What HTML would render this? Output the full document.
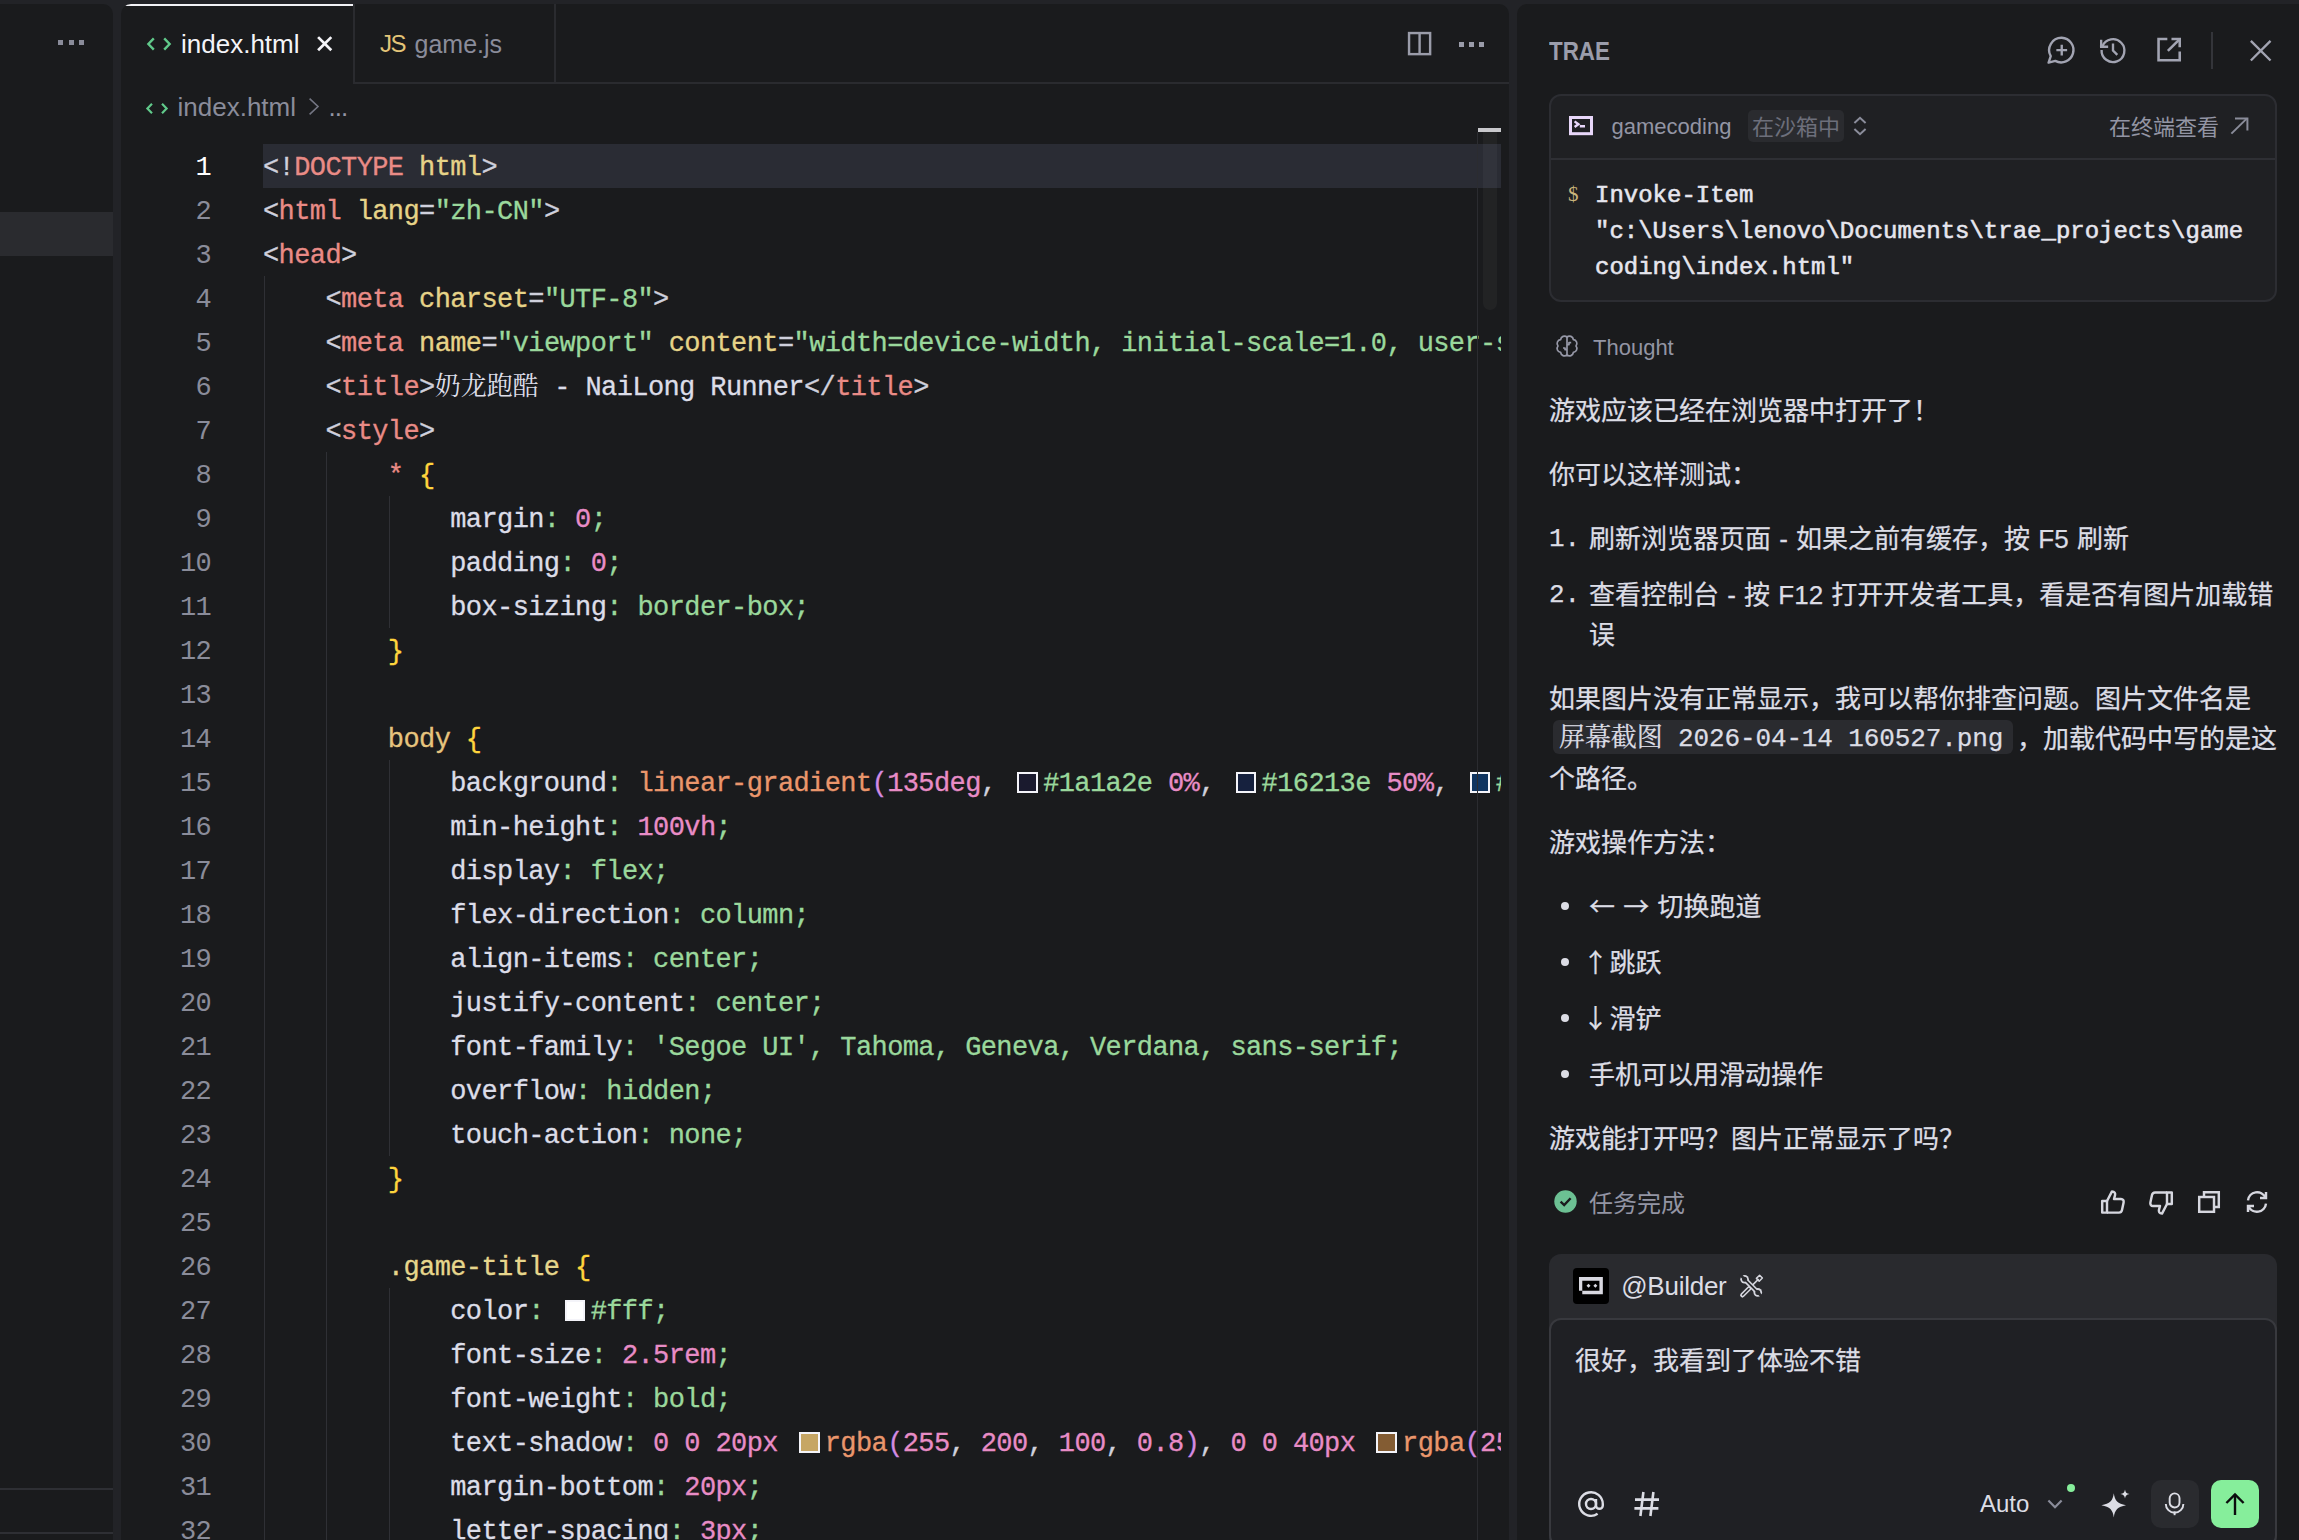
<!DOCTYPE html>
<html lang="zh-CN">
<head>
<meta charset="UTF-8">
<title>TRAE - index.html</title>
<style>
*{margin:0;padding:0;box-sizing:border-box}
html,body{width:2299px;height:1540px;overflow:hidden;background:#222327}
body{position:relative;font-family:"Liberation Sans","Noto Sans CJK SC",sans-serif;color:#dcdde5;-webkit-font-smoothing:antialiased}
.abs{position:absolute}
svg{position:absolute;overflow:visible}
/* panels */
#left{left:0;top:4px;width:113px;height:1540px;background:#1a1b1d;border-radius:0 10px 0 0}
#editor{left:121px;top:4px;width:1388px;height:1540px;background:#1a1b1d;border-radius:10px 10px 0 0;overflow:hidden}
#chat{left:1517px;top:4px;width:790px;height:1540px;background:#1a1b1d;border-radius:10px 0 0 0;overflow:hidden}
.t{position:absolute;white-space:pre;line-height:1}
/* code */
#code{position:absolute;left:0;top:0;width:1380px;height:1540px;overflow:hidden}
.ln{position:absolute;left:0;width:90.2px;text-align:right;font:27px/44px "Liberation Mono",monospace;letter-spacing:-0.6px;color:#8a8c9a;white-space:pre;height:44px;margin-top:2px}
.cl{position:absolute;left:142px;height:44px;font:27px/44px "Liberation Mono","Noto Serif CJK SC",monospace;letter-spacing:-0.6px;white-space:pre;color:#dcdde8;margin-top:2px;-webkit-text-stroke-width:0.3px}
.cj{font-size:26px;letter-spacing:0;-webkit-text-stroke-width:0}
.cl i,.ln i{font-style:normal}
.p{color:#cfd0dc}.n{color:#e98b86}.a{color:#e6d388}.s{color:#9ad89c}.w{color:#dcdde8}
.k{color:#e88cc6}.f{color:#ea966c}.v{color:#d38ae2}.y{color:#ffd53d}.o{color:#e6d68c}.b{color:#e6c47e}
.sw{display:inline-block;width:20.8px;height:20.8px;border:2.3px solid #f4f4f9;margin:0 5.2px 0 5.2px;vertical-align:middle;position:relative;top:-1px}
.gd{position:absolute;width:1px;background:#2f3035}
.m{font-size:26px;color:#dcdde5;word-spacing:1px;-webkit-text-stroke-width:0.25px}
.tm{font:24px/1 "Liberation Mono",monospace;color:#e6e6ee;-webkit-text-stroke:0.55px #e6e6ee}
.ic{font-family:"Liberation Mono","Noto Serif CJK SC",monospace;letter-spacing:-0.12px;word-spacing:0;position:relative;top:-2px}
.ar{font-family:"Noto Sans CJK SC",sans-serif}
.dot{position:absolute;left:44px;width:8px;height:8px;border-radius:50%;background:#dcdde5}
</style>
</head>
<body>

<!-- LEFT STRIP -->
<div id="left" class="abs">
  <div class="abs" style="left:0;top:208px;width:113px;height:44px;background:#2a2b2f"></div>
  <div class="abs" style="left:58px;top:36px;width:5px;height:5px;background:#8a8c9a"></div>
  <div class="abs" style="left:68.5px;top:36px;width:5px;height:5px;background:#8a8c9a"></div>
  <div class="abs" style="left:79px;top:36px;width:5px;height:5px;background:#8a8c9a"></div>
  <div class="abs" style="left:0;top:1484px;width:113px;height:2px;background:#2e2f34"></div>
  <div class="abs" style="left:0;top:1528px;width:113px;height:2px;background:#2e2f34"></div>
</div>

<!-- EDITOR -->
<div id="editor" class="abs">
  <!-- tab bar -->
  <div class="abs" style="left:232px;top:78px;width:1160px;height:2px;background:#2a2b2f"></div>
  <div class="abs" style="left:0;top:0;width:232px;height:2px;background:#f2f2f6"></div>
  <div class="abs" style="left:232px;top:0;width:2px;height:80px;background:#2a2b2f"></div>
  <div class="abs" style="left:433px;top:0;width:2px;height:80px;background:#2a2b2f"></div>
  <svg style="left:25px;top:33px" width="26" height="14" viewBox="0 0 26 14" fill="none" stroke="#60c98a" stroke-width="2.4"><path d="M7.8 1.4 L2.4 7 L7.8 12.6"/><path d="M18.2 1.4 L23.6 7 L18.2 12.6"/></svg>
  <div class="t" style="left:60px;top:27px;font-size:26px;color:#f4f4f8">index.html</div>
  <svg style="left:196.2px;top:32.4px" width="15.4" height="15.4" viewBox="0 0 14 14" fill="none" stroke="#f4f4f8" stroke-width="2.5"><path d="M1 1 L13 13 M13 1 L1 13"/></svg>
  <div class="t" style="left:259px;top:28px;font-size:24px;color:#e3c478;letter-spacing:-1.4px">JS</div>
  <div class="t" style="left:293.5px;top:28px;font-size:25px;color:#8a8c9a">game.js</div>
  <!-- top-right actions -->
  <svg style="left:1286.6px;top:27.8px" width="23.2" height="23.2" viewBox="0 0 22 22" fill="none" stroke="#9a9ca9" stroke-width="2.3"><rect x="1" y="1" width="20" height="20"/><path d="M11 1 V21"/></svg>
  <div class="abs" style="left:1338px;top:38px;width:5px;height:5px;background:#9a9ca9"></div>
  <div class="abs" style="left:1348px;top:38px;width:5px;height:5px;background:#9a9ca9"></div>
  <div class="abs" style="left:1358px;top:38px;width:5px;height:5px;background:#9a9ca9"></div>
  <!-- breadcrumb -->
  <svg style="left:25px;top:99px" width="22" height="11" viewBox="0 0 22 11" fill="none" stroke="#60c98a" stroke-width="2.2"><path d="M6 0.8 L1.4 5.5 L6 10.2"/><path d="M16 0.8 L20.6 5.5 L16 10.2"/></svg>
  <div class="t" style="left:56.5px;top:89.5px;font-size:26px;color:#8a8c9a">index.html</div>
  <svg style="left:188px;top:94px" width="10" height="17" viewBox="0 0 10 17" fill="none" stroke="#737582" stroke-width="1.6"><path d="M0.6 0.7 L9 8.5 L0.6 16.3"/></svg>
  <div class="t" style="left:207.4px;top:89.5px;font-size:26px;color:#9395a4;letter-spacing:-0.87px">...</div>
  <!-- current line highlight -->
  <div class="abs" style="left:142px;top:140px;width:1238px;height:44px;background:#2a2c34"></div>
  <!-- indent guides -->
  <div class="gd" style="left:143px;top:272px;height:1300px"></div>
  <div class="gd" style="left:205px;top:448px;height:1100px"></div>
  <div class="gd" style="left:267.5px;top:492px;height:132px"></div>
  <div class="gd" style="left:267.5px;top:756px;height:396px"></div>
  <div class="gd" style="left:267.5px;top:1284px;height:300px"></div>
  <!-- code -->
  <div id="code">
<div class=ln style="top:140px;color:#fff">1</div><div class=cl style="top:140px"><i class=p>&lt;!</i><i class=n>DOCTYPE</i><i class=a> html</i><i class=p>&gt;</i></div>
<div class=ln style="top:184px">2</div><div class=cl style="top:184px"><i class=p>&lt;</i><i class=n>html</i><i class=a> lang</i><i class=p>=</i><i class=s>"zh-CN"</i><i class=p>&gt;</i></div>
<div class=ln style="top:228px">3</div><div class=cl style="top:228px"><i class=p>&lt;</i><i class=n>head</i><i class=p>&gt;</i></div>
<div class=ln style="top:272px">4</div><div class=cl style="top:272px">    <i class=p>&lt;</i><i class=n>meta</i><i class=a> charset</i><i class=p>=</i><i class=s>"UTF-8"</i><i class=p>&gt;</i></div>
<div class=ln style="top:316px">5</div><div class=cl style="top:316px">    <i class=p>&lt;</i><i class=n>meta</i><i class=a> name</i><i class=p>=</i><i class=s>"viewport"</i><i class=a> content</i><i class=p>=</i><i class=s>"width=device-width, initial-scale=1.0, user-scalable=no"</i><i class=p>&gt;</i></div>
<div class=ln style="top:360px">6</div><div class=cl style="top:360px">    <i class=p>&lt;</i><i class=n>title</i><i class=p>&gt;</i><i class=cj>奶龙跑酷</i> - NaiLong Runner<i class=p>&lt;/</i><i class=n>title</i><i class=p>&gt;</i></div>
<div class=ln style="top:404px">7</div><div class=cl style="top:404px">    <i class=p>&lt;</i><i class=n>style</i><i class=p>&gt;</i></div>
<div class=ln style="top:448px">8</div><div class=cl style="top:448px">        <i class=n>*</i> <i class=y>{</i></div>
<div class=ln style="top:492px">9</div><div class=cl style="top:492px">            margin<i class=s>:</i> <i class=k>0</i><i class=s>;</i></div>
<div class=ln style="top:536px">10</div><div class=cl style="top:536px">            padding<i class=s>:</i> <i class=k>0</i><i class=s>;</i></div>
<div class=ln style="top:580px">11</div><div class=cl style="top:580px">            box-sizing<i class=s>:</i> <i class=s>border-box;</i></div>
<div class=ln style="top:624px">12</div><div class=cl style="top:624px">        <i class=y>}</i></div>
<div class=ln style="top:668px">13</div><div class=cl style="top:668px"></div>
<div class=ln style="top:712px">14</div><div class=cl style="top:712px">        <i class=b>body</i> <i class=y>{</i></div>
<div class=ln style="top:756px">15</div><div class=cl style="top:756px">            background<i class=s>:</i> <i class=f>linear-gradient</i><i class=v>(</i><i class=k>135deg</i><i class=p>,</i> <i class=sw style="background:#1a1a2e"></i><i class=s>#1a1a2e</i> <i class=k>0%</i><i class=p>,</i> <i class=sw style="background:#16213e"></i><i class=s>#16213e</i> <i class=k>50%</i><i class=p>,</i> <i class=sw style="background:#0f3460"></i><i class=s>#0f3460</i> <i class=k>100%</i><i class=v>)</i><i class=s>;</i></div>
<div class=ln style="top:800px">16</div><div class=cl style="top:800px">            min-height<i class=s>:</i> <i class=k>100vh</i><i class=s>;</i></div>
<div class=ln style="top:844px">17</div><div class=cl style="top:844px">            display<i class=s>:</i> <i class=s>flex;</i></div>
<div class=ln style="top:888px">18</div><div class=cl style="top:888px">            flex-direction<i class=s>:</i> <i class=s>column;</i></div>
<div class=ln style="top:932px">19</div><div class=cl style="top:932px">            align-items<i class=s>:</i> <i class=s>center;</i></div>
<div class=ln style="top:976px">20</div><div class=cl style="top:976px">            justify-content<i class=s>:</i> <i class=s>center;</i></div>
<div class=ln style="top:1020px">21</div><div class=cl style="top:1020px">            font-family<i class=s>:</i> <i class=s>'Segoe UI', Tahoma, Geneva, Verdana, sans-serif;</i></div>
<div class=ln style="top:1064px">22</div><div class=cl style="top:1064px">            overflow<i class=s>:</i> <i class=s>hidden;</i></div>
<div class=ln style="top:1108px">23</div><div class=cl style="top:1108px">            touch-action<i class=s>:</i> <i class=s>none;</i></div>
<div class=ln style="top:1152px">24</div><div class=cl style="top:1152px">        <i class=y>}</i></div>
<div class=ln style="top:1196px">25</div><div class=cl style="top:1196px"></div>
<div class=ln style="top:1240px">26</div><div class=cl style="top:1240px">        <i class=o>.game-title</i> <i class=y>{</i></div>
<div class=ln style="top:1284px">27</div><div class=cl style="top:1284px">            color<i class=s>:</i> <i class=sw style="background:#fff"></i><i class=s>#fff;</i></div>
<div class=ln style="top:1328px">28</div><div class=cl style="top:1328px">            font-size<i class=s>:</i> <i class=k>2.5rem</i><i class=s>;</i></div>
<div class=ln style="top:1372px">29</div><div class=cl style="top:1372px">            font-weight<i class=s>:</i> <i class=s>bold;</i></div>
<div class=ln style="top:1416px">30</div><div class=cl style="top:1416px">            text-shadow<i class=s>:</i> <i class=k>0 0 20px</i> <i class=sw style="background:#c6a664"></i><i class=f>rgba</i><i class=v>(</i><i class=k>255</i><i class=p>,</i> <i class=k>200</i><i class=p>,</i> <i class=k>100</i><i class=p>,</i> <i class=k>0.8</i><i class=v>)</i><i class=p>,</i> <i class=k>0 0 40px</i> <i class=sw style="background:#835c33"></i><i class=f>rgba</i><i class=v>(</i><i class=k>255</i><i class=p>,</i> <i class=k>150</i><i class=p>,</i> <i class=k>50</i><i class=p>,</i> <i class=k>0.6</i><i class=v>)</i><i class=s>;</i></div>
<div class=ln style="top:1460px">31</div><div class=cl style="top:1460px">            margin-bottom<i class=s>:</i> <i class=k>20px</i><i class=s>;</i></div>
<div class=ln style="top:1504px">32</div><div class=cl style="top:1504px">            letter-spacing<i class=s>:</i> <i class=k>3px</i><i class=s>;</i></div>  </div>
  <!-- scrollbar -->
  <div class="abs" style="left:1356px;top:128px;width:1px;height:1412px;background:#2b2c30"></div>
  <div class="abs" style="left:1362px;top:128px;width:14px;height:178px;background:rgba(255,255,255,0.035);border-radius:0 0 7px 7px"></div>
  <div class="abs" style="left:1357px;top:124px;width:23px;height:4px;background:#c8c8cc"></div>
</div>

<!-- CHAT -->
<div id="chat" class="abs">
  <!-- header -->
  <div class="t" style="left:32px;top:34.4px;font-size:26px;font-weight:bold;color:#9b9dab;transform:scaleX(0.86);transform-origin:0 0">TRAE</div>
  <svg style="left:528.6px;top:31.4px" width="30.2" height="30.2" viewBox="0 0 28 28" fill="none" stroke="#a2a4b2" stroke-width="2.2"><path d="M14.6 2.6 A11.4 11.4 0 1 1 8.6 24 L2.4 25.6 L4.4 19.6 A11.4 11.4 0 0 1 14.6 2.6 Z" stroke-linejoin="round"/><path d="M14.6 9 V19 M9.6 14 H19.6"/></svg>
  <svg style="left:582px;top:32px" width="28" height="28" viewBox="0 0 26 26" fill="none" stroke="#a2a4b2" stroke-width="2.2"><path d="M3.2 9.5 A10.6 10.6 0 1 1 2.4 13"/><path d="M2 3.5 V10 H8.5"/><path d="M13 7 V13.5 L17 17.5"/></svg>
  <svg style="left:639.6px;top:32.8px" width="24.8" height="24.8" viewBox="0 0 24 24" fill="none" stroke="#a2a4b2" stroke-width="2.5"><path d="M10 2 H1.5 V22.5 H22 V14"/><path d="M14 2 H22 V10"/><path d="M22 2 L10.5 13.5"/></svg>
  <div class="abs" style="left:694px;top:28px;width:2px;height:36.5px;background:#34353a"></div>
  <svg style="left:733.4px;top:35.6px" width="21.4" height="21.4" viewBox="0 0 20 20" fill="none" stroke="#a2a4b2" stroke-width="2.2"><path d="M0.8 0.8 L19.2 19.2 M19.2 0.8 L0.8 19.2"/></svg>
  <!-- terminal card -->
  <div class="abs" style="left:32px;top:89.5px;width:728px;height:208px;background:#1f2023;border:2px solid #2c2d32;border-radius:12px"></div>
  <div class="abs" style="left:34px;top:154px;width:724px;height:2px;background:#2e2f34"></div>
  <svg style="left:51.96px;top:112.4px" width="24" height="19.2" viewBox="0 0 24 19.2" fill="none" stroke="#e8d7fa"><rect x="1.5" y="1.5" width="21" height="16.2" stroke-width="3"/><path d="M5.6 5.4 L9.4 8.2 L5.6 11" stroke-width="2.4"/><path d="M10.8 10.3 H16" stroke-width="2.4"/></svg>
  <div class="t" style="left:94.5px;top:111.8px;font-size:22px;color:#9395a4">gamecoding</div>
  <div class="abs" style="left:231px;top:106px;width:96px;height:32px;background:#2a2b2f;border-radius:5px"></div>
  <div class="t" style="left:235px;top:112.6px;font-size:22px;color:#6d6f7b">在沙箱中</div>
  <svg style="left:336px;top:112px" width="14" height="20" viewBox="0 0 14 20" fill="none" stroke="#8a8c9a" stroke-width="2"><path d="M1.4 7 L7 1.8 L12.6 7"/><path d="M1.4 13 L7 18.2 L12.6 13"/></svg>
  <div class="t" style="left:592px;top:113px;font-size:22px;color:#9395a4">在终端查看</div>
  <svg style="left:713px;top:113px" width="19" height="18" viewBox="0 0 19 18" fill="none" stroke="#8a8c9a" stroke-width="2"><path d="M1.4 16.6 L17 1.4"/><path d="M5 1.4 H17.4 V13.6"/></svg>
  <div class="t" style="left:51px;top:180px;font:21px/1 'Liberation Serif',serif;color:#c9b47c">$</div>
  <div class="t tm" style="left:78px;top:180.1px">Invoke-Item</div>
  <div class="t tm" style="left:78px;top:216.1px">"c:\Users\lenovo\Documents\trae_projects\game</div>
  <div class="t tm" style="left:78px;top:252.1px">coding\index.html"</div>
  <!-- thought -->
  <svg style="left:38.9px;top:330.9px" width="22" height="22" viewBox="0 0 22 22" fill="none" stroke="#9698a7" stroke-width="1.7" stroke-linejoin="round"><path d="M11.00 2.00 A3.9 3.9 0 0 1 17.36 4.64 A3.9 3.9 0 0 1 20.00 11.00 A3.9 3.9 0 0 1 17.36 17.36 A3.9 3.9 0 0 1 11.00 20.00 A3.9 3.9 0 0 1 4.64 17.36 A3.9 3.9 0 0 1 2.00 11.00 A3.9 3.9 0 0 1 4.64 4.64 A3.9 3.9 0 0 1 11.00 2.00 Z"/><path d="M11 2 V20"/><path d="M11 9.6 H13 V7.6 H15.2"/><path d="M11 14.6 H9 V13 H7"/></svg>
  <div class="t" style="left:76px;top:333.3px;font-size:22px;color:#9395a4">Thought</div>
  <!-- message -->
  <div class="t m" style="left:32px;top:393.9px">游戏应该已经在浏览器中打开了！</div>
  <div class="t m" style="left:32px;top:457.9px">你可以这样测试：</div>
  <div class="t m" style="left:32px;top:521.9px;font-family:'Liberation Mono',monospace">1.</div>
  <div class="t m" style="left:72px;top:521.9px">刷新浏览器页面 - 如果之前有缓存，按 F5 刷新</div>
  <div class="t m" style="left:32px;top:577.9px;font-family:'Liberation Mono',monospace">2.</div>
  <div class="t m" style="left:72px;top:577.9px">查看控制台 - 按 F12 打开开发者工具，看是否有图片加载错</div>
  <div class="t m" style="left:72px;top:617.9px">误</div>
  <div class="t m" style="left:32px;top:681.9px">如果图片没有正常显示，我可以帮你排查问题。图片文件名是</div>
  <div class="abs" style="left:36px;top:716px;width:460px;height:34px;background:#2a2b2f;border-radius:6px"></div>
  <div class="t m" style="left:42px;top:721.9px"><span class="ic">屏幕截图 2026-04-14 160527.png</span></div>
  <div class="t m" style="left:500px;top:721.9px">，加载代码中写的是这</div>
  <div class="t m" style="left:32px;top:761.9px">个路径。</div>
  <div class="t m" style="left:32px;top:825.9px">游戏操作方法：</div>
  <div class="dot" style="top:898px"></div>
  <div class="t m" style="left:72px;top:887.6px"><span class="ar">←</span> <span class="ar">→</span> 切换跑道</div>
  <div class="dot" style="top:954px"></div>
  <div class="t m ar" style="left:65.4px;top:943.6px">↑</div><div class="t m" style="left:92.4px;top:945.9px">跳跃</div>
  <div class="dot" style="top:1010px"></div>
  <div class="t m ar" style="left:65.4px;top:999.6px">↓</div><div class="t m" style="left:92.4px;top:1001.9px">滑铲</div>
  <div class="dot" style="top:1066px"></div>
  <div class="t m" style="left:72px;top:1057.9px">手机可以用滑动操作</div>
  <div class="t m" style="left:32px;top:1121.9px">游戏能打开吗？图片正常显示了吗？</div>
  <!-- status row -->
  <svg style="left:36.5px;top:1186px" width="23" height="23" viewBox="0 0 23 23"><circle cx="11.5" cy="11.5" r="11.2" fill="#6cc093"/><path d="M6.6 11.6 L10.2 15 L16.6 8.2" fill="none" stroke="#1a1b1d" stroke-width="2.4"/></svg>
  <div class="t" style="left:72px;top:1188.3px;font-size:24px;color:#9395a4">任务完成</div>
  <svg style="left:584px;top:1186px" width="24" height="24" viewBox="0 0 24 24" fill="none" stroke="#d6d7df" stroke-width="2.45" stroke-linejoin="round"><path d="M1.2 11 H6 V22.6 H1.2 Z"/><path d="M6 11 L11 1.4 C13.6 1.4 14.6 3.4 14 5.4 L13 9 H20 C22 9 23 10.6 22.6 12.4 L21 20 C20.6 21.8 19.4 22.6 18 22.6 H6"/></svg>
  <svg style="left:632px;top:1187px" width="24" height="24" viewBox="0 0 24 24" fill="none" stroke="#d6d7df" stroke-width="2.45" stroke-linejoin="round"><g transform="rotate(180 12 12)"><path d="M1.2 11 H6 V22.6 H1.2 Z"/><path d="M6 11 L11 1.4 C13.6 1.4 14.6 3.4 14 5.4 L13 9 H20 C22 9 23 10.6 22.6 12.4 L21 20 C20.6 21.8 19.4 22.6 18 22.6 H6"/></g></svg>
  <svg style="left:681px;top:1187px" width="22" height="22" viewBox="0 0 22 22" fill="none" stroke="#d6d7df" stroke-width="2.45"><rect x="1.2" y="6" width="14.8" height="14.8"/><path d="M6 6 V1.2 H20.8 V16 H16"/></svg>
  <svg style="left:729px;top:1187px" width="22" height="22" viewBox="0 0 22 22" fill="none" stroke="#d6d7df" stroke-width="2.45"><path d="M2 9.4 A9.2 9.2 0 0 1 19.4 6.4"/><path d="M20 12.6 A9.2 9.2 0 0 1 2.6 15.6"/><path d="M20 1 V7 H14"/><path d="M2 21 V15 H8"/></svg>
  <!-- input -->
  <div class="abs" style="left:32px;top:1250px;width:728px;height:320px;background:#292a2e;border-radius:12px"></div>
  <div class="abs" style="left:56px;top:1264px;width:36px;height:36px;background:#000;border-radius:4px"></div>
  <svg style="left:61.75px;top:1273.3px" width="24" height="18" viewBox="0 0 24 18"><path d="M0 0 H23.85 V17.3 H3.27 V13.87 H0 Z M3.27 3.74 V13.87 H20.42 V3.74 Z" fill="#d8d8e0" fill-rule="evenodd"/><path d="M9.5 6.7 L11.5 8.73 L9.5 10.76 L7.5 8.73 Z M16.37 6.7 L18.37 8.73 L16.37 10.76 L14.37 8.73 Z" fill="#d8d8e0"/></svg>
  <div class="t" style="left:104.2px;top:1269.2px;font-size:26px;color:#dcdde5;letter-spacing:-0.25px">@Builder</div>
  <svg style="left:222.9px;top:1270.3px" width="23" height="23" viewBox="0 0 23 23" fill="none"><path d="M18.6 5 L9 14.6" stroke="#d6d7df" stroke-width="1.7"/><path d="M19.6 1.2 L22.4 4 L19.2 7.2 L16.4 4.4 Z" stroke="#d6d7df" stroke-width="1.5" stroke-linejoin="round"/><path d="M9.2 14.4 L2.4 21.2" stroke="#d6d7df" stroke-width="4.6" stroke-linecap="round"/><path d="M9 14.6 L2.6 21" stroke="#292a2e" stroke-width="1.5" stroke-linecap="round"/><path d="M4.6 5.2 L17.8 18.4" stroke="#d6d7df" stroke-width="5"/><circle cx="4.6" cy="5.2" r="4.3" fill="#d6d7df"/><circle cx="17.8" cy="18.4" r="4.3" fill="#d6d7df"/><path d="M4.6 5.2 L17.8 18.4" stroke="#292a2e" stroke-width="1.7"/><circle cx="4.6" cy="5.2" r="2.5" fill="#292a2e"/><circle cx="17.8" cy="18.4" r="2.5" fill="#292a2e"/><path d="M4.6 5.2 L0 0.6" stroke="#292a2e" stroke-width="2.8"/><path d="M17.8 18.4 L23 23.6" stroke="#292a2e" stroke-width="2.8"/></svg>
  <div class="abs" style="left:32px;top:1314px;width:728px;height:229px;background:#1f2024;border:2px solid #38393e;border-radius:12px"></div>
  <div class="t m" style="left:58px;top:1343.9px">很好，我看到了体验不错</div>
  <svg style="left:60px;top:1486px" width="28" height="28" viewBox="0 0 28 28" fill="none" stroke="#dcdde5" stroke-width="2.4"><circle cx="14" cy="14" r="5"/><path d="M19 9 V15.4 A3.4 3.4 0 0 0 25.8 15.4 V14 A11.8 11.8 0 1 0 20.6 23.8"/></svg>
  <svg style="left:117px;top:1487px" width="26" height="26" viewBox="0 0 26 26" fill="none" stroke="#dcdde5" stroke-width="2.6"><path d="M9.4 1 L6.4 25 M19.4 1 L16.4 25 M1 8.6 H25 M0.4 17.4 H24.4"/></svg>
  <div class="t" style="left:463px;top:1487.5px;font-size:24px;color:#dcdde5">Auto</div>
  <svg style="left:530px;top:1495px" width="16" height="10" viewBox="0 0 16 10" fill="none" stroke="#8a8c9a" stroke-width="2.2"><path d="M1.4 1.4 L8 8.2 L14.6 1.4"/></svg>
  <div class="abs" style="left:549.6px;top:1480px;width:8.4px;height:8.4px;border-radius:50%;background:#86ee9b"></div>
  <svg style="left:582px;top:1486px" width="30" height="30" viewBox="0 0 30 30" fill="#dcdde5"><path d="M14.8 3.2 C15.8 10.6 18.6 13.6 27 15.2 C18.6 16.8 15.8 19.8 14.8 27.4 C13.8 19.8 11 16.8 2.4 15.2 C11 13.6 13.8 10.6 14.8 3.2 Z"/><path d="M26 -0.6 C26.4 2.2 27.4 3.4 30.6 4 C27.4 4.6 26.4 5.8 26 8.6 C25.6 5.8 24.6 4.6 21.4 4 C24.6 3.4 25.6 2.2 26 -0.6 Z"/></svg>
  <div class="abs" style="left:634px;top:1476px;width:48px;height:48px;background:#2a2b2f;border-radius:10px"></div>
  <svg style="left:647.4px;top:1488px" width="21.2" height="24.6" viewBox="0 0 24 28" fill="none" stroke="#dcdde5" stroke-width="2.2"><rect x="6.4" y="1.6" width="11.2" height="16" rx="5.6"/><path d="M2 13.6 A10 10 0 0 0 22 13.6"/><path d="M12 22 V26.4"/></svg>
  <div class="abs" style="left:694px;top:1476px;width:48px;height:48px;background:#86ee9b;border-radius:10px"></div>
  <svg style="left:707px;top:1488px" width="22" height="24" viewBox="0 0 22 24" fill="none" stroke="#0c0d0e" stroke-width="2.4"><path d="M11 23 V2.4"/><path d="M2.4 11 L11 2.4 L19.6 11"/></svg>
</div>

</body>
</html>
